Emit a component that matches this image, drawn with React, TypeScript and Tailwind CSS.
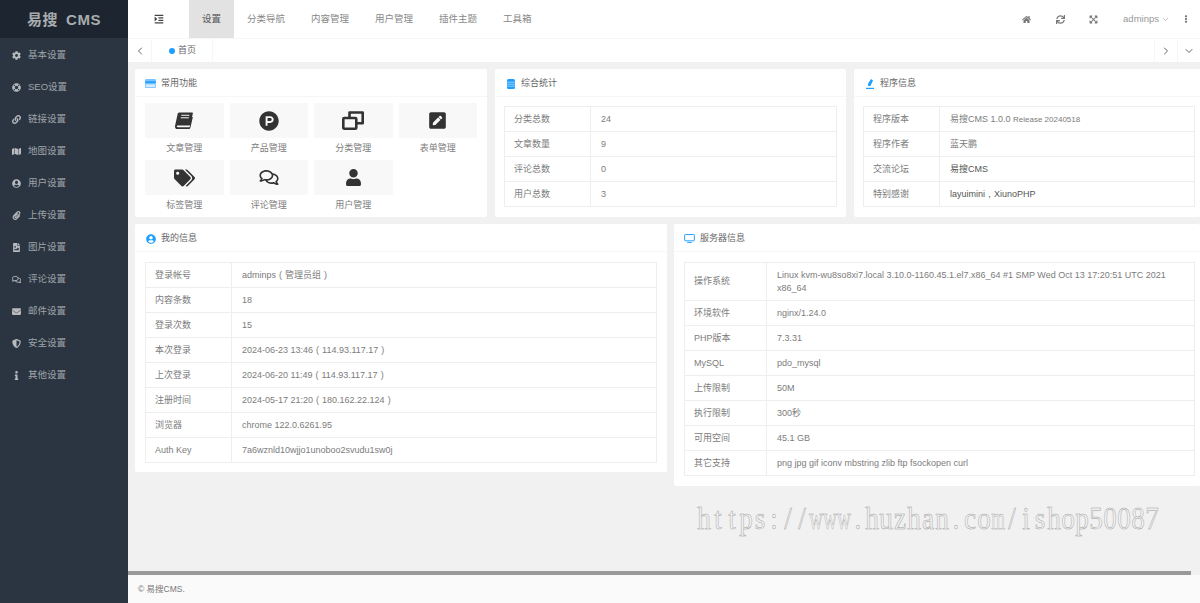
import { ReactNode } from "react";
import { ChevronDown, ChevronLeft, ChevronRight } from "lucide-react";
import {
  FaCog,
  FaEllipsisV,
  FaEnvelope,
  FaExpandArrowsAlt,
  FaFileImage,
  FaHome,
  FaIndent,
  FaInfo,
  FaLifeRing,
  FaLink,
  FaMap,
  FaPaperclip,
  FaPenSquare,
  FaProductHunt,
  FaRegComments,
  FaShieldAlt,
  FaSync,
  FaTags,
  FaUser,
  FaUserCircle,
} from "react-icons/fa";

const BookIcon = ({ className }: { className?: string }) => (
  <svg viewBox="0 0 20 18" className={className} fill="#333">
    <path d="M5 0h14.2c.6 0 .8.4.7 1L17 13.4c-.2.8-.7 1.1-1.4 1.1H3.4c-.9 0-1.4.4-1.4 1s.5 1 1.4 1h12.4l.5-.4 2.6-11.4.9.6-2.7 11.8c-.2.8-.8 1.4-1.6 1.4H3.2C1.3 19 0 17.6 0 15.6c0-.5.1-1 .2-1.4L3 1.6C3.2.6 4 0 5 0z" />
    <path d="M7 3.2h9M6.4 6h9" stroke="#f8f8f8" strokeWidth="1.1" />
  </svg>
);

const CloneIcon = ({ className }: { className?: string }) => (
  <svg viewBox="0 0 22 19" className={className} fill="none" stroke="#333" strokeWidth="2.6" strokeLinejoin="round">
    <rect x="1.3" y="7" width="13" height="10.7" rx="1" />
    <path d="M7.5 7V1.5h13.2v10.8h-6.4" />
  </svg>
);

const SIDE_MENU = [
  { label: "基本设置", icon: FaCog },
  { label: "SEO设置", icon: FaLifeRing },
  { label: "链接设置", icon: FaLink },
  { label: "地图设置", icon: FaMap },
  { label: "用户设置", icon: FaUserCircle },
  { label: "上传设置", icon: FaPaperclip },
  { label: "图片设置", icon: FaFileImage },
  { label: "评论设置", icon: FaRegComments },
  { label: "邮件设置", icon: FaEnvelope },
  { label: "安全设置", icon: FaShieldAlt },
  { label: "其他设置", icon: FaInfo },
];

const TOP_NAV = ["设置", "分类导航", "内容管理", "用户管理", "插件主题", "工具箱"];

const QUICK = [
  { label: "文章管理", icon: BookIcon, size: "w-[18px] h-[17px]" },
  { label: "产品管理", icon: FaProductHunt, size: "w-[20px] h-[20px]" },
  { label: "分类管理", icon: CloneIcon, size: "w-[22px] h-[19px]" },
  { label: "表单管理", icon: FaPenSquare, size: "w-[19px] h-[19px]" },
  { label: "标签管理", icon: FaTags, size: "w-[21px] h-[18px]" },
  { label: "评论管理", icon: FaRegComments, size: "w-[20px] h-[17px]" },
  { label: "用户管理", icon: FaUser, size: "w-[15px] h-[17px]" },
];

// 全角标点居中显示
const Mark = ({ ch }: { ch: string }) => <span className="inline-block w-[9px] text-center">{ch}</span>;

const STATS = [
  ["分类总数", "24"],
  ["文章数量", "9"],
  ["评论总数", "0"],
  ["用户总数", "3"],
];

const PROGRAM = [
  ["程序版本", <>易搜CMS 1.0.0 <span className="text-[8px]">Release 20240518</span></>],
  ["程序作者", "蓝天鹏"],
  ["交流论坛", <span className="text-[#555]">易搜CMS</span>],
  ["特别感谢", <span className="text-[#555]">layuimini<Mark ch="," />XiunoPHP</span>],
];

const MY_INFO = [
  ["登录帐号", <>adminps<Mark ch="(" />管理员组<Mark ch=")" /></>],
  ["内容条数", "18"],
  ["登录次数", "15"],
  ["本次登录", <>2024-06-23 13:46<Mark ch="(" />114.93.117.17<Mark ch=")" /></>],
  ["上次登录", <>2024-06-20 11:49<Mark ch="(" />114.93.117.17<Mark ch=")" /></>],
  ["注册时间", <>2024-05-17 21:20<Mark ch="(" />180.162.22.124<Mark ch=")" /></>],
  ["浏览器", "chrome 122.0.6261.95"],
  ["Auth Key", "7a6wznld10wjjo1unoboo2svudu1sw0j"],
];

const SERVER = [
  ["操作系统", "Linux kvm-wu8so8xi7.local 3.10.0-1160.45.1.el7.x86_64 #1 SMP Wed Oct 13 17:20:51 UTC 2021 x86_64"],
  ["环境软件", "nginx/1.24.0"],
  ["PHP版本", "7.3.31"],
  ["MySQL", "pdo_mysql"],
  ["上传限制", "50M"],
  ["执行限制", "300秒"],
  ["可用空间", "45.1 GB"],
  ["其它支持", "png jpg gif iconv mbstring zlib ftp fsockopen curl"],
];

const WATERMARK = "https://www.huzhan.com/ishop50087";

function Card({ title, icon, children, className }: { title: string; icon: ReactNode; children: ReactNode; className: string }) {
  return (
    <div className={`bg-white rounded-[2px] overflow-hidden ${className}`}>
      <div className="h-[28px] pt-[2px] border-b border-[#f6f6f6] flex items-center pl-[10px] gap-[5px] text-[9px] text-[#666]">
        <span className="w-[11px] flex justify-center">{icon}</span>
        {title}
      </div>
      {children}
    </div>
  );
}

function InfoTable({ rows, labelWidth }: { rows: (string | ReactNode)[][]; labelWidth: string }) {
  return (
    <div className="border border-[#eeeeee] border-b-0 text-[9px] leading-[13px] text-[#7c7c7c]">
      {rows.map((row, i) => (
        <div key={i} className="flex border-b border-[#eeeeee] min-h-[25px]">
          <div className={`${labelWidth} shrink-0 border-r border-[#eeeeee] pl-[9px] flex items-center`}>{row[0]}</div>
          <div className="flex-1 pl-[10px] pr-[20px] py-[5.5px] flex items-center">
            <div>{row[1]}</div>
          </div>
        </div>
      ))}
    </div>
  );
}

export default function App() {
  return (
    <div className="w-[1200px] h-[603px] overflow-hidden flex font-['Liberation_Sans','Noto_Sans_CJK_SC',sans-serif] bg-[#f1f1f1]">
      <aside className="w-[128px] shrink-0 bg-[#2a3541] flex flex-col">
        <div className="h-[38px] mb-[1px] pt-[2px] bg-[#1d2630] flex items-center justify-center gap-[8px] text-[15px] font-bold text-[#a9acaf] tracking-[0.5px]">
          <span>易搜</span>
          <span>CMS</span>
        </div>
        {SIDE_MENU.map((item) => {
          const Icon = item.icon;
          return (
            <div key={item.label} className="h-[32px] flex items-center pl-[12px] gap-[7px] text-[9.5px] text-[#a0a4a9]">
              <span className="w-[9px] flex justify-center">
                <Icon className="w-[9px] h-[9px] text-[#b8babd]" />
              </span>
              {item.label}
            </div>
          );
        })}
      </aside>

      <main className="flex-1 min-w-0 flex flex-col">
        <header className="h-[39px] bg-white border-b border-[#f6f6f6] flex items-center shrink-0">
          <div className="w-[61px] flex justify-center">
            <FaIndent className="w-[10px] h-[10px] text-[#444]" />
          </div>
          {TOP_NAV.map((name, i) => (
            <div
              key={name}
              className={`h-full flex items-center px-[13px] text-[9.5px] ${i === 0 ? "bg-[#e2e2e2] text-[#555]" : "text-[#888]"}`}
            >
              {name}
            </div>
          ))}
          <div className="ml-auto flex items-center text-[#777]">
            <FaHome className="w-[9px] h-[9px]" />
            <FaSync className="w-[9px] h-[9px] ml-[25px]" />
            <FaExpandArrowsAlt className="w-[9px] h-[9px] ml-[24px]" />
            <span className="ml-[25px] text-[9.5px] text-[#999]">adminps</span>
            <ChevronDown className="w-[9px] h-[9px] ml-[2px] text-[#aaa]" />
            <FaEllipsisV className="w-[8px] h-[8px] ml-[12px] mr-[10px]" />
          </div>
        </header>

        <div className="h-[23px] bg-white flex items-center shrink-0">
          <div className="w-[24px] h-full border-r border-[#f6f6f6] flex items-center justify-center">
            <ChevronLeft className="w-[12px] h-[12px] text-[#666]" />
          </div>
          <div className="w-[61px] h-full border-r border-[#f6f6f6] flex items-center pl-[17px] gap-[3px] text-[9px] text-[#666]">
            <span className="w-[6px] h-[6px] rounded-full bg-[#1e9fff]" />
            首页
          </div>
          <div className="ml-auto w-[23px] h-full border-l border-[#f6f6f6] flex items-center justify-center">
            <ChevronRight className="w-[12px] h-[12px] text-[#666]" />
          </div>
          <div className="w-[23px] h-full border-l border-[#f6f6f6] flex items-center justify-center">
            <ChevronDown className="w-[12px] h-[12px] text-[#666]" />
          </div>
        </div>

        <div className="flex-1 min-h-0 relative pt-[7px] pl-[7px]">
          <div className="flex gap-[8px]">
            <Card
              title="常用功能"
              className="w-[352px] h-[148px] shrink-0"
              icon={
                <svg viewBox="0 0 12 10" className="w-[11px] h-[9px]">
                  <rect width="12" height="10" rx="1" fill="#7cc4ff" />
                  <rect y="2.5" width="12" height="2" fill="#1e9fff" />
                  <rect x="1" y="6" width="10" height="3" fill="#d6edff" />
                </svg>
              }
            >
              <div className="grid grid-cols-4 gap-x-[6px] px-[10px] pt-[6px]">
                {QUICK.map((q) => {
                  const Icon = q.icon;
                  return (
                    <div key={q.label} className="h-[57px] flex flex-col items-center">
                      <div className="w-full h-[35px] bg-[#f8f8f8] flex items-center justify-center">
                        <Icon className={`${q.size} text-[#333]`} />
                      </div>
                      <div className="mt-[4px] text-[9px] leading-[13px] text-[#7c7c7c]">{q.label}</div>
                    </div>
                  );
                })}
              </div>
            </Card>

            <Card
              title="综合统计"
              className="w-[351px] h-[148px] shrink-0"
              icon={
                <svg viewBox="0 0 8 10" className="w-[8px] h-[10px]">
                  <rect width="8" height="10" rx="1.5" fill="#1e9fff" />
                  <path d="M0 3.2h8M0 5.2h8M0 7.2h8" stroke="#bfe3ff" strokeWidth="0.7" />
                </svg>
              }
            >
              <div className="px-[9px] pt-[9px]">
                <InfoTable rows={STATS} labelWidth="w-[86px]" />
              </div>
            </Card>

            <Card
              title="程序信息"
              className="w-[346px] h-[148px] shrink-0"
              icon={
                <svg viewBox="0 0 8 10" className="w-[8px] h-[10px]">
                  <path d="M5 0l2 1.6L4.4 7H2.2L2 4.8z" fill="#1e9fff" />
                  <rect y="8.8" width="8" height="1.2" fill="#1e9fff" />
                </svg>
              }
            >
              <div className="pl-[9px] pr-[5px] pt-[9px]">
                <InfoTable rows={PROGRAM} labelWidth="w-[76px]" />
              </div>
            </Card>
          </div>

          <div className="flex gap-[7px] mt-[7px] items-start">
            <Card
              title="我的信息"
              className="w-[532px] shrink-0 pb-[9px]"
              icon={<FaUserCircle className="w-[10px] h-[10px] text-[#1e9fff]" />}
            >
              <div className="px-[10px] pt-[10px]">
                <InfoTable rows={MY_INFO} labelWidth="w-[86px]" />
              </div>
            </Card>

            <Card
              title="服务器信息"
              className="w-[526px] shrink-0 pb-[10px]"
              icon={
                <svg viewBox="0 0 12 10" className="w-[11px] h-[9px]" fill="none" stroke="#1e9fff">
                  <rect x="0.6" y="0.6" width="10.8" height="7" rx="0.8" strokeWidth="1.1" />
                  <path d="M3.5 9.5h5" strokeWidth="1.1" />
                </svg>
              }
            >
              <div className="pl-[10px] pr-[5px] pt-[10px]">
                <InfoTable rows={SERVER} labelWidth="w-[82px]" />
              </div>
            </Card>
          </div>

          {/* 水印 */}
          <div className="absolute left-[569px] top-[438px] flex font-['Liberation_Serif',serif] text-[32px] leading-[36px] text-transparent [-webkit-text-stroke:0.5px_#a0a0a0]">
            {WATERMARK.split("").map((ch, i) => (
              <span
                key={i}
                className={`w-[14px] flex justify-center ${ch === "w" ? "scale-x-[0.6]" : ch === "m" ? "scale-x-[0.55]" : "scale-x-[0.85]"}`}
              >
                {ch}
              </span>
            ))}
          </div>
        </div>

        <div className="h-[4px] bg-[#f1f1f1] shrink-0 flex">
          <div className="w-[1063px] h-full bg-[#999999]" />
        </div>
        <footer className="h-[28px] bg-[#fafafa] shrink-0 flex items-center pl-[10px] text-[8.5px] text-[#777]">
          © 易搜CMS.
        </footer>
      </main>
    </div>
  );
}
